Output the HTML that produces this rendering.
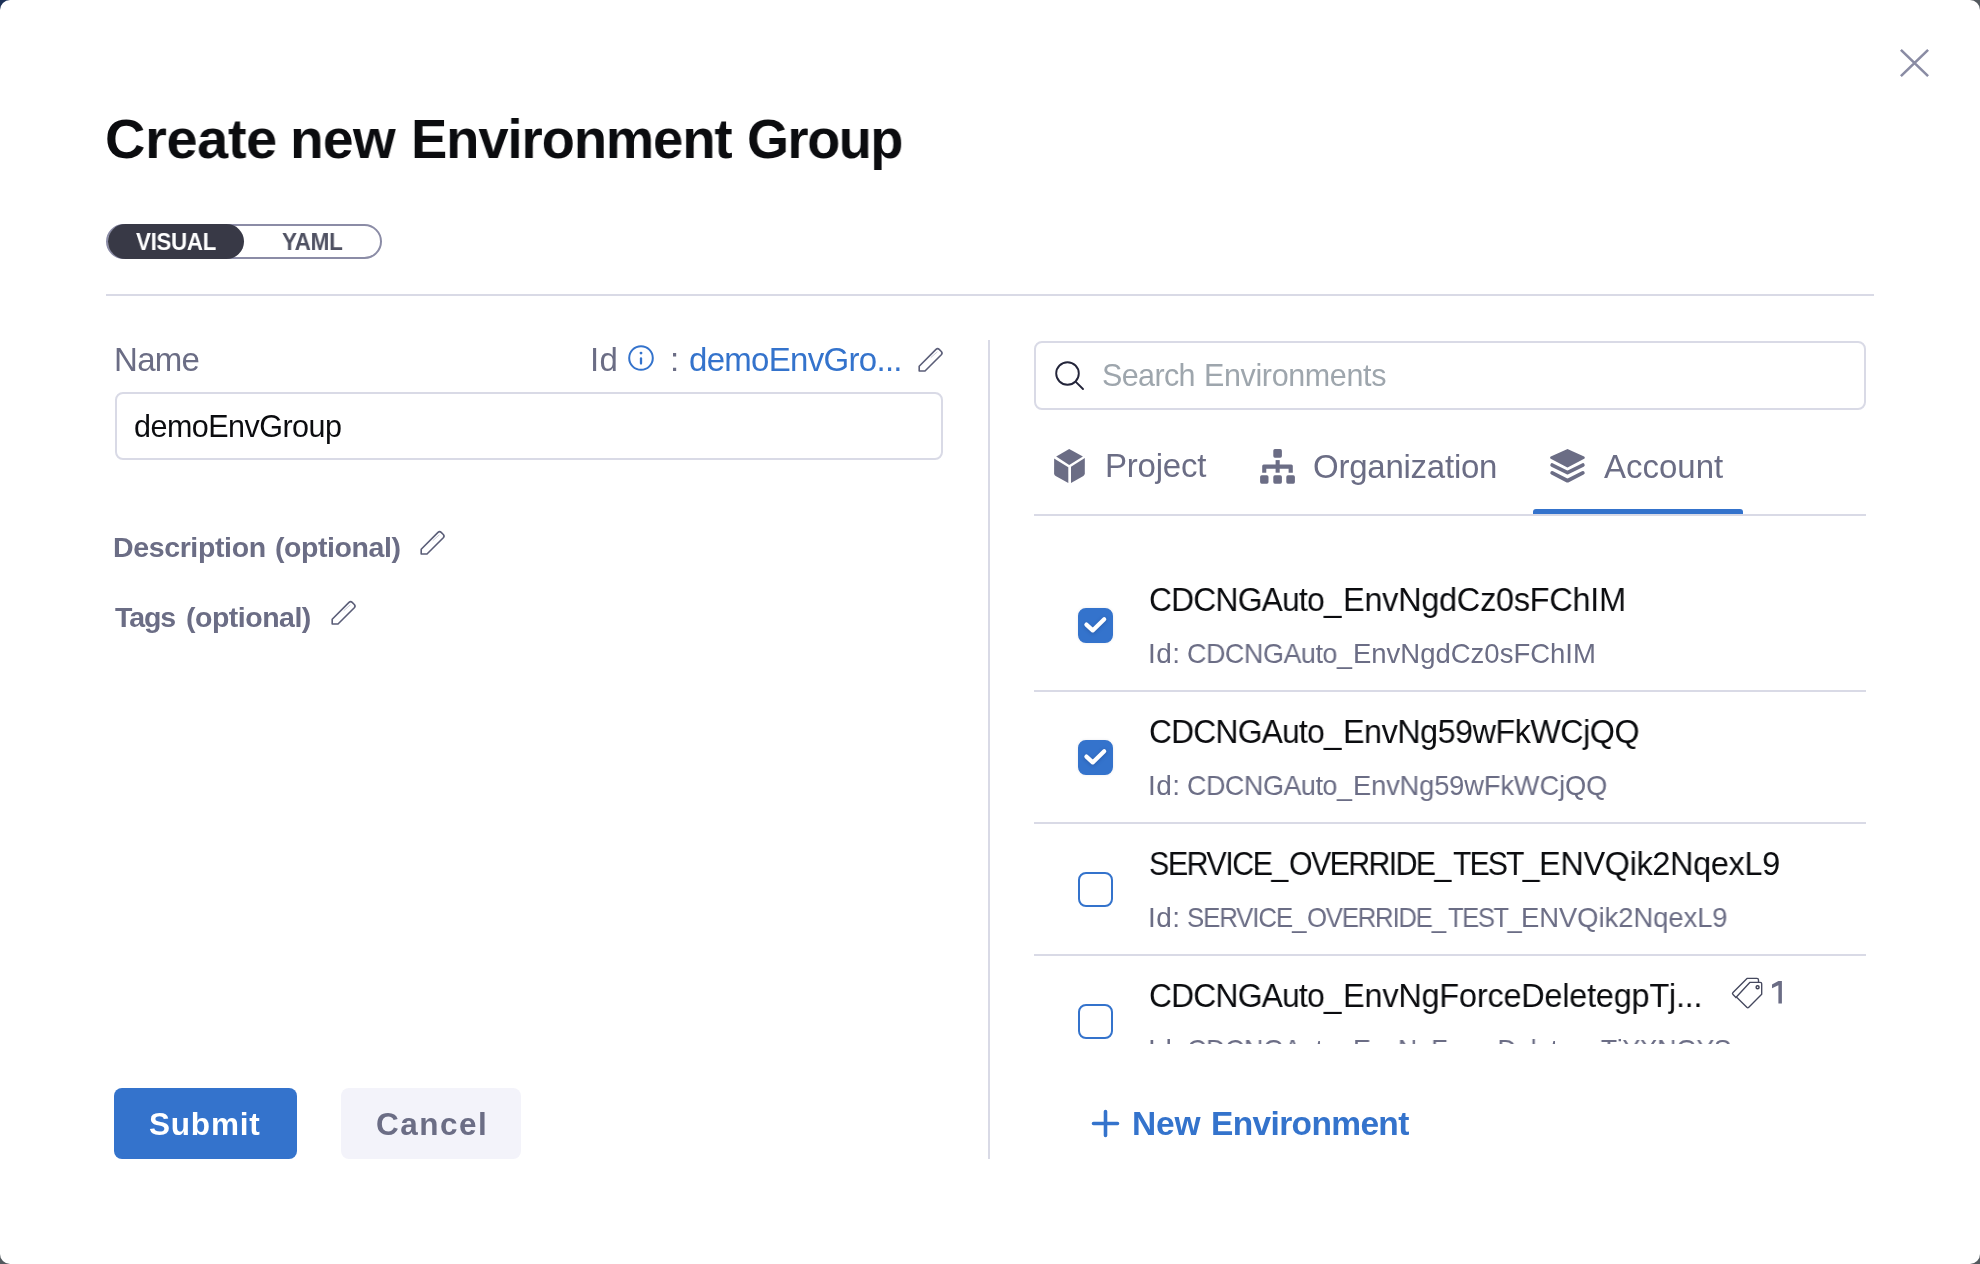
<!DOCTYPE html>
<html><head><meta charset="utf-8">
<style>
html,body{margin:0;padding:0;width:1980px;height:1264px;overflow:hidden;background:#53595e;}
body{position:relative;font-family:"Liberation Sans",sans-serif;}
#tl{position:absolute;left:0;top:0;width:14px;height:14px;background:#1c3157;}
#dlg{position:absolute;left:0;top:0;width:1980px;height:1264px;background:#fff;border-radius:10px;overflow:hidden;}
.t{position:absolute;white-space:nowrap;line-height:1;will-change:transform;}
.hr{position:absolute;background:#d9dae6;}
svg{position:absolute;overflow:visible;}
.cb{position:absolute;left:1078px;width:31px;height:31px;border:2px solid #3473cc;border-radius:8px;background:#fff;}
.cb.on{background:#3473cc;box-shadow:0 0 3px rgba(30,40,80,0.10);}
</style></head>
<body>
<div id="tl"></div>
<div id="dlg">

<svg style="left:1900px;top:49px" width="29" height="28" viewBox="0 0 29 28"><path d="M0.9 0.9L28.1 27.1M28.1 0.9L0.9 27.1" stroke="#8a8ca4" stroke-width="2.6" fill="none"/></svg>
<div class="t" style="left:105.4px;top:110.7px;font-size:56px;letter-spacing:-0.27px;font-weight:700;color:#0b0c0f;transform:scaleX(0.9959);transform-origin:0 0;">Create</div>
<div class="t" style="left:290.1px;top:110.7px;font-size:56px;letter-spacing:-0.7px;font-weight:700;color:#0b0c0f;transform:scaleX(0.9829);transform-origin:0 0;">new</div>
<div class="t" style="left:410.5px;top:110.7px;font-size:56px;letter-spacing:-1.05px;font-weight:700;color:#0b0c0f;transform:scaleX(0.9694);transform-origin:0 0;">Environment</div>
<div class="t" style="left:746.8px;top:110.7px;font-size:56px;letter-spacing:-1.46px;font-weight:700;color:#0b0c0f;transform:scaleX(0.9639);transform-origin:0 0;">Group</div>
<div style="position:absolute;left:106px;top:224px;width:272px;height:31px;border:2px solid #8b8ca6;border-radius:18px;"></div>
<div style="position:absolute;left:108px;top:224px;width:136px;height:35px;background:#383946;border-radius:17.5px;"></div>
<div class="t" style="left:136.0px;top:230.2px;font-size:24px;letter-spacing:-0.3px;font-weight:700;color:#fff;transform:scaleX(0.929);transform-origin:0 0;">VISUAL</div>
<div class="t" style="left:281.5px;top:229.9px;font-size:24px;letter-spacing:-0.3px;font-weight:700;color:#4f5162;transform:scaleX(0.937);transform-origin:0 0;">YAML</div>
<div class="hr" style="left:106px;top:294px;width:1768px;height:2px;"></div>
<div class="t" style="left:113.8px;top:342.6px;font-size:33px;letter-spacing:-0.7px;font-weight:400;color:#6b6d85;">Name</div>
<div class="t" style="left:590.3px;top:342.7px;font-size:33px;letter-spacing:0.4px;font-weight:400;color:#6b6d85;">Id</div>
<svg style="left:628px;top:345px" width="26" height="26" viewBox="0 0 26 26"><circle cx="13" cy="13" r="11.8" stroke="#3473cc" stroke-width="2" fill="none"/><path d="M13 13.4V18.6" stroke="#3473cc" stroke-width="2.3" stroke-linecap="round"/><circle cx="13" cy="8.1" r="1.45" fill="#3473cc"/></svg>
<div class="t" style="left:670.3px;top:342.7px;font-size:33px;letter-spacing:-0.62px;font-weight:400;color:#6b6d85;">:</div>
<div class="t" style="left:689.0px;top:342.7px;font-size:33px;letter-spacing:-0.7px;font-weight:400;color:#3473cc;">demoEnvGro...</div>
<svg style="left:910px;top:340px" width="40" height="40" viewBox="0 0 40 40"><path d="M9.2 26.2L26 9.4Q27.6 7.9 29.2 9.4L31.3 11.5Q32.8 13.1 31.3 14.7L15 31H9.2Z" stroke="#5b5e78" stroke-width="1.6" fill="none" stroke-linejoin="round"/><path d="M20.8 17.6L27.4 11.8" stroke="#c9cad8" stroke-width="1"/></svg>
<div style="position:absolute;left:115px;top:392px;width:824px;height:64px;border:2px solid #d9dae6;border-radius:8px;"></div>
<div class="t" style="left:133.9px;top:410.8px;font-size:30.5px;letter-spacing:-0.52px;font-weight:400;color:#0b0c0f;">demoEnvGroup</div>
<div class="t" style="left:113.4px;top:532.6px;font-size:28.5px;letter-spacing:-0.37px;font-weight:700;color:#6b6d85;">Description</div>
<div class="t" style="left:274.6px;top:532.6px;font-size:28.5px;letter-spacing:-0.42px;font-weight:700;color:#6b6d85;">(optional)</div>
<svg style="left:411.6px;top:523.1px" width="40" height="40" viewBox="0 0 40 40"><path d="M9.2 26.2L26 9.4Q27.6 7.9 29.2 9.4L31.3 11.5Q32.8 13.1 31.3 14.7L15 31H9.2Z" stroke="#5b5e78" stroke-width="1.6" fill="none" stroke-linejoin="round"/><path d="M20.8 17.6L27.4 11.8" stroke="#c9cad8" stroke-width="1"/></svg>
<div class="t" style="left:115.4px;top:603.0px;font-size:28.5px;letter-spacing:-1.07px;font-weight:700;color:#6b6d85;">Tags</div>
<div class="t" style="left:186.2px;top:603.0px;font-size:28.5px;letter-spacing:-0.5px;font-weight:700;color:#6b6d85;">(optional)</div>
<svg style="left:322.9px;top:593px" width="40" height="40" viewBox="0 0 40 40"><path d="M9.2 26.2L26 9.4Q27.6 7.9 29.2 9.4L31.3 11.5Q32.8 13.1 31.3 14.7L15 31H9.2Z" stroke="#5b5e78" stroke-width="1.6" fill="none" stroke-linejoin="round"/><path d="M20.8 17.6L27.4 11.8" stroke="#c9cad8" stroke-width="1"/></svg>
<div style="position:absolute;left:114px;top:1088px;width:183px;height:71px;background:#3473cc;border-radius:8px;"></div>
<div class="t" style="left:149.3px;top:1109.1px;font-size:31.5px;letter-spacing:0.8px;font-weight:700;color:#fff;">Submit</div>
<div style="position:absolute;left:341px;top:1088px;width:180px;height:71px;background:#f3f3fa;border-radius:8px;"></div>
<div class="t" style="left:376.0px;top:1109.1px;font-size:31.5px;letter-spacing:1.5px;font-weight:700;color:#6b6d85;">Cancel</div>
<div class="hr" style="left:988px;top:340px;width:2px;height:819px;"></div>
<div style="position:absolute;left:1034px;top:341px;width:828px;height:65px;border:2px solid #d9dae6;border-radius:8px;"></div>
<svg style="left:1055px;top:361px" width="29" height="29" viewBox="0 0 29 29"><circle cx="12.5" cy="12.5" r="11.3" stroke="#23253a" stroke-width="1.9" fill="none"/><path d="M20.8 20.8L28 28" stroke="#23253a" stroke-width="1.9" stroke-linecap="round"/></svg>
<div class="t" style="left:1102.2px;top:360.2px;font-size:30.5px;letter-spacing:-0.62px;font-weight:400;color:#9ea6ad;">Search</div>
<div class="t" style="left:1204.1px;top:360.2px;font-size:30.5px;letter-spacing:-0.37px;font-weight:400;color:#9ea6ad;">Environments</div>
<svg style="left:1048px;top:443px" width="44" height="47" viewBox="0 0 44 47"><path d="M21.2 6.1L34.9 13.6L21.2 21.9L8.2 13.4Z" fill="#6b6d85"/><path d="M6.1 15.6L20.3 24.2V40L7.6 33.1Q6.1 32.2 6.1 30.6Z" fill="#6b6d85"/><path d="M36.8 14.9V30.5Q36.8 32 35.4 32.9L23 40V23.8Z" fill="#6b6d85"/></svg>
<div class="t" style="left:1104.5px;top:449.4px;font-size:33px;letter-spacing:-0.22px;font-weight:400;color:#6b6d85;">Project</div>
<svg style="left:1254px;top:443px" width="48" height="47" viewBox="0 0 48 47"><rect x="19.3" y="6.1" width="8.6" height="8.6" rx="1.6" fill="#6b6d85"/><rect x="21.6" y="17.1" width="4.1" height="12.6" fill="#6b6d85"/><path d="M8.2 29.7V23.1Q8.2 21.6 9.7 21.6H37.3Q38.8 21.6 38.8 23.1V29.7H34.6V25.7H12.3V29.7Z" fill="#6b6d85"/><rect x="6.1" y="32.3" width="8.4" height="8.4" rx="1.6" fill="#6b6d85"/><rect x="19.3" y="32.3" width="8.6" height="8.4" rx="1.6" fill="#6b6d85"/><rect x="32.3" y="32.3" width="8.6" height="8.4" rx="1.6" fill="#6b6d85"/></svg>
<div class="t" style="left:1312.8px;top:449.8px;font-size:33px;letter-spacing:-0.24px;font-weight:400;color:#6b6d85;">Organization</div>
<svg style="left:1543px;top:443px" width="48" height="47" viewBox="0 0 48 47"><path d="M24.5 7.3L40.6 14.7L24.5 23.3L8.3 14.6Z" fill="#6b6d85" stroke="#6b6d85" stroke-width="2.4" stroke-linejoin="round"/><path d="M9.2 22.1L24.5 29.6L39.8 22.1" stroke="#6b6d85" stroke-width="3.8" fill="none" stroke-linecap="round" stroke-linejoin="round"/><path d="M9.2 29.9L24.5 37.7L39.8 29.9" stroke="#6b6d85" stroke-width="3.8" fill="none" stroke-linecap="round" stroke-linejoin="round"/></svg>
<div class="t" style="left:1603.6px;top:450.0px;font-size:33px;letter-spacing:0.0px;font-weight:400;color:#6b6d85;">Account</div>
<div style="position:absolute;left:1533px;top:509px;width:210px;height:6px;background:#3473cc;border-radius:3px 3px 0 0;"></div>
<div class="hr" style="left:1034px;top:514px;width:832px;height:2px;"></div>
<div style="position:absolute;left:0;top:530px;width:1980px;height:514px;overflow:hidden;"><div style="position:absolute;left:0;top:-530px;width:1980px;height:1264px;">
<div class="cb on" style="top:608px"><svg style="left:-2px;top:-2px" width="35" height="35" viewBox="0 0 35 35"><path d="M8.4 17.6L14.7 23.4L26.2 12.2" stroke="rgba(20,40,90,0.18)" stroke-width="6" stroke-linecap="round" stroke-linejoin="round" fill="none" style="filter:blur(1.5px)"/><path d="M8.4 16.6L14.7 22.4L26.2 11.2" stroke="#fff" stroke-width="4.2" stroke-linecap="round" stroke-linejoin="round" fill="none"/></svg></div>
<div class="t" style="left:1149.0px;top:582.9px;font-size:33px;letter-spacing:-0.8px;font-weight:400;color:#0b0c0f;transform:scaleX(0.9625);transform-origin:0 0;">CDCNGAuto_</div>
<div class="t" style="left:1343.3px;top:582.9px;font-size:33px;letter-spacing:-0.3px;font-weight:400;color:#0b0c0f;transform:scaleX(0.9848);transform-origin:0 0;">EnvNgdCz0sFChIM</div>
<div class="t" style="left:1148.0px;top:639.7px;font-size:27.5px;letter-spacing:0.38px;font-weight:400;color:#6b6d85;transform:scaleX(1.0185);transform-origin:0 0;">Id:</div>
<div class="t" style="left:1187.3px;top:639.7px;font-size:27.5px;letter-spacing:-0.44px;font-weight:400;color:#6b6d85;transform:scaleX(0.9774);transform-origin:0 0;">CDCNGAuto_</div>
<div class="t" style="left:1353.3px;top:639.7px;font-size:27.5px;letter-spacing:-0.01px;font-weight:400;color:#6b6d85;transform:scaleX(0.9987);transform-origin:0 0;">EnvNgdCz0sFChIM</div>
<div class="hr" style="left:1034px;top:690px;width:832px;height:2px;"></div>
<div class="cb on" style="top:740px"><svg style="left:-2px;top:-2px" width="35" height="35" viewBox="0 0 35 35"><path d="M8.4 17.6L14.7 23.4L26.2 12.2" stroke="rgba(20,40,90,0.18)" stroke-width="6" stroke-linecap="round" stroke-linejoin="round" fill="none" style="filter:blur(1.5px)"/><path d="M8.4 16.6L14.7 22.4L26.2 11.2" stroke="#fff" stroke-width="4.2" stroke-linecap="round" stroke-linejoin="round" fill="none"/></svg></div>
<div class="t" style="left:1149.0px;top:714.9px;font-size:33px;letter-spacing:-0.8px;font-weight:400;color:#0b0c0f;transform:scaleX(0.9625);transform-origin:0 0;">CDCNGAuto_</div>
<div class="t" style="left:1343.3px;top:714.9px;font-size:33px;letter-spacing:-0.48px;font-weight:400;color:#0b0c0f;transform:scaleX(0.9783);transform-origin:0 0;">EnvNg59wFkWCjQQ</div>
<div class="t" style="left:1148.0px;top:771.7px;font-size:27.5px;letter-spacing:0.38px;font-weight:400;color:#6b6d85;transform:scaleX(1.0185);transform-origin:0 0;">Id:</div>
<div class="t" style="left:1187.3px;top:771.7px;font-size:27.5px;letter-spacing:-0.44px;font-weight:400;color:#6b6d85;transform:scaleX(0.9774);transform-origin:0 0;">CDCNGAuto_</div>
<div class="t" style="left:1353.3px;top:771.7px;font-size:27.5px;letter-spacing:-0.12px;font-weight:400;color:#6b6d85;transform:scaleX(0.9909);transform-origin:0 0;">EnvNg59wFkWCjQQ</div>
<div class="hr" style="left:1034px;top:822px;width:832px;height:2px;"></div>
<div class="cb" style="top:872px"></div>
<div class="t" style="left:1149.1px;top:846.9px;font-size:33px;letter-spacing:-1.63px;font-weight:400;color:#0b0c0f;transform:scaleX(0.9219);transform-origin:0 0;">SERVICE_</div>
<div class="t" style="left:1289.1px;top:846.9px;font-size:33px;letter-spacing:-1.77px;font-weight:400;color:#0b0c0f;transform:scaleX(0.9188);transform-origin:0 0;">OVERRIDE_</div>
<div class="t" style="left:1452.5px;top:846.9px;font-size:33px;letter-spacing:-1.94px;font-weight:400;color:#0b0c0f;transform:scaleX(0.9115);transform-origin:0 0;">TEST_</div>
<div class="t" style="left:1539.3px;top:846.9px;font-size:33px;letter-spacing:-0.34px;font-weight:400;color:#0b0c0f;transform:scaleX(0.9831);transform-origin:0 0;">ENVQik2NqexL9</div>
<div class="t" style="left:1148.0px;top:903.7px;font-size:27.5px;letter-spacing:0.38px;font-weight:400;color:#6b6d85;transform:scaleX(1.0185);transform-origin:0 0;">Id:</div>
<div class="t" style="left:1187.4px;top:903.7px;font-size:27.5px;letter-spacing:-1.15px;font-weight:400;color:#6b6d85;transform:scaleX(0.9362);transform-origin:0 0;">SERVICE_</div>
<div class="t" style="left:1307.4px;top:903.7px;font-size:27.5px;letter-spacing:-1.28px;font-weight:400;color:#6b6d85;transform:scaleX(0.9351);transform-origin:0 0;">OVERRIDE_</div>
<div class="t" style="left:1447.5px;top:903.7px;font-size:27.5px;letter-spacing:-1.48px;font-weight:400;color:#6b6d85;transform:scaleX(0.9275);transform-origin:0 0;">TEST_</div>
<div class="t" style="left:1521.3px;top:903.7px;font-size:27.5px;letter-spacing:-0.06px;font-weight:400;color:#6b6d85;transform:scaleX(0.9971);transform-origin:0 0;">ENVQik2NqexL9</div>
<div class="hr" style="left:1034px;top:954px;width:832px;height:2px;"></div>
<div class="cb" style="top:1004px"></div>
<div class="t" style="left:1149.0px;top:978.9px;font-size:33px;letter-spacing:-0.8px;font-weight:400;color:#0b0c0f;transform:scaleX(0.9625);transform-origin:0 0;">CDCNGAuto_</div>
<div class="t" style="left:1343.3px;top:978.9px;font-size:33px;letter-spacing:-0.24px;font-weight:400;color:#0b0c0f;transform:scaleX(0.9845);transform-origin:0 0;">EnvNgForceDeletegpTj...</div>
<div class="t" style="left:1148.0px;top:1035.7px;font-size:27.5px;letter-spacing:0.38px;font-weight:400;color:#6b6d85;transform:scaleX(1.0185);transform-origin:0 0;">Id:</div>
<div class="t" style="left:1187.3px;top:1035.7px;font-size:27.5px;letter-spacing:-0.44px;font-weight:400;color:#6b6d85;transform:scaleX(0.9774);transform-origin:0 0;">CDCNGAuto_</div>
<div class="t" style="left:1353.4px;top:1035.7px;font-size:27.5px;letter-spacing:-0.42px;font-weight:400;color:#6b6d85;transform:scaleX(0.9708);transform-origin:0 0;">EnvNgForceDeletegpTjYXNGYS</div>
<svg style="left:1725px;top:970px" width="70" height="45" viewBox="0 0 70 45"><path d="M25 12.3H35.2Q36.7 12.3 36.7 13.8V24.2L23.8 37.3Q22.8 38.3 21.8 37.3L11.4 27Z" stroke="#45485e" stroke-width="1.35" fill="none" stroke-linejoin="round"/><path d="M33.5 12.3V10Q33.5 8.4 31.9 8.4H22L8 22.4Q6.9 23.5 8 24.6L11.4 28" stroke="#45485e" stroke-width="1.35" fill="none" stroke-linejoin="round"/><circle cx="32.6" cy="17.3" r="1.5" stroke="#3d4054" stroke-width="1.4" fill="none"/><path d="M47 14.6L53.4 11H56.9V33.6H53.4V15.3L47 18.3Z" fill="#6b6d85"/></svg>
</div></div>
<svg style="left:1092px;top:1110px" width="27" height="27" viewBox="0 0 27 27"><path d="M13.5 1.5V25.5M1.5 13.5H25.5" stroke="#3473cc" stroke-width="3.6" stroke-linecap="round"/></svg>
<div class="t" style="left:1131.7px;top:1107.0px;font-size:33.5px;letter-spacing:-0.2px;font-weight:700;color:#3473cc;">New</div>
<div class="t" style="left:1210.9px;top:1107.0px;font-size:33.5px;letter-spacing:-0.64px;font-weight:700;color:#3473cc;">Environment</div>
</div>
</body></html>
